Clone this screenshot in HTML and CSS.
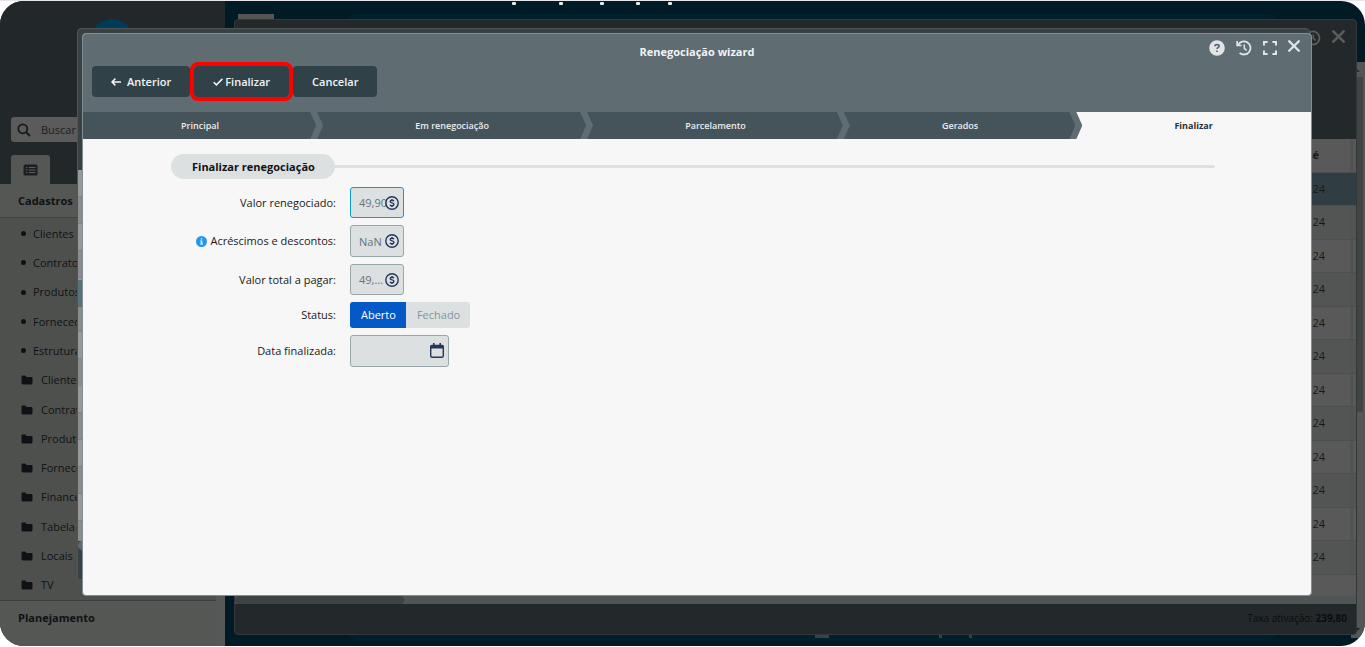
FILE: index.html
```html
<!DOCTYPE html>
<html lang="pt-BR">
<head>
<meta charset="utf-8">
<title>Renegociação wizard</title>
<link rel="stylesheet" href="styles.css">
</head>
<body>
<svg class="sprite" aria-hidden="true">
  <symbol id="folder" viewBox="0 0 12 10"><path d="M1.5 0.5H4.2L5.6 2H10.2Q11.5 2 11.5 3.2V8Q11.5 9.4 10.2 9.4H1.8Q0.5 9.4 0.5 8V1.6Q.5.5 1.5.5Z" fill="#0e1214"/></symbol>
  <symbol id="coin" viewBox="0 0 14 14"><circle cx="7" cy="7" r="6.2" fill="none" stroke="#26365a" stroke-width="1.4"/><path d="M8.9 5.2Q8.3 4.3 7 4.3Q5.2 4.3 5.2 5.5Q5.2 6.6 7 6.9Q8.9 7.3 8.9 8.5Q8.9 9.8 7 9.8Q5.6 9.8 5 8.8M7 3V4.3M7 9.8V11" fill="none" stroke="#26365a" stroke-width="1.4"/></symbol>
  <symbol id="close" viewBox="0 0 12 12"><path d="M1.2 1.2L10.8 10.8M10.8 1.2L1.2 10.8" fill="none" stroke="currentColor" stroke-width="2.3" stroke-linecap="round"/></symbol>
  <symbol id="history" viewBox="0 0 16 16"><path d="M2.2 5A6.5 6.5 0 1 1 3.6 12.8" fill="none" stroke="currentColor" stroke-width="1.8"/><path d="M.3 1V6.2H5.5V4.8L2.1 4.4L1.9 1Z" fill="currentColor"/><path d="M8.3 4.5V8.4L10.6 10.4" fill="none" stroke="currentColor" stroke-width="1.5"/></symbol>
</svg>
<div class="app">
  <aside class="sidebar">
    <div class="side-top">
      <div class="avatar"></div>
      <label class="search">
        <svg width="14" height="14" viewBox="0 0 14 14"><circle cx="5.8" cy="5.8" r="4.5" fill="none" stroke="#151a1c" stroke-width="1.8"/><path d="M9.2 9.2L13 13" stroke="#151a1c" stroke-width="2"/></svg>
        <input type="text" aria-label="Buscar" placeholder="Buscar no menu">
      </label>
      <button class="tab" type="button" aria-label="Menu">
        <svg width="15" height="12" viewBox="0 0 15 12"><rect x=".5" y=".5" width="14" height="11" rx="1.5" fill="#1b2022"/><path d="M3 3.5h1.5M3 6h1.5M3 8.5h1.5M6 3.5h6.5M6 6h6.5M6 8.5h6.5" stroke="#5b5d5b" stroke-width="1.1"/></svg>
      </button>
    </div>
    <h2 class="side-title">Cadastros</h2>
    <ul class="menu">
      <li><i class="dot"></i>Clientes</li>
      <li><i class="dot"></i>Contratos</li>
      <li><i class="dot"></i>Produtos</li>
      <li><i class="dot"></i>Fornecedores</li>
      <li><i class="dot"></i>Estruturas</li>
      <li><svg class="fold"><use href="#folder"/></svg>Clientes</li>
      <li><svg class="fold"><use href="#folder"/></svg>Contratos</li>
      <li><svg class="fold"><use href="#folder"/></svg>Produtos</li>
      <li><svg class="fold"><use href="#folder"/></svg>Fornecedores</li>
      <li><svg class="fold"><use href="#folder"/></svg>Financeiro</li>
      <li><svg class="fold"><use href="#folder"/></svg>Tabela</li>
      <li><svg class="fold"><use href="#folder"/></svg>Locais</li>
      <li><svg class="fold"><use href="#folder"/></svg>TV</li>
    </ul>
    <h2 class="side-title last">Planejamento</h2>
  </aside>
  <div class="gutter"></div>
  <main class="desk">
    <div class="marks"><i></i><i></i><i></i><i></i><i></i></div>
    <div class="desk-panel"></div>
    <div class="chip"></div>
    <div class="foot-marks"><i></i><i></i><i></i></div>
    <div class="page-scroll"><i class="arrow up"></i><i class="bar"></i><i class="arrow down"></i></div>
    <section class="window back">
      <header class="back-head">
        <svg class="ic16"><use href="#history"/></svg>
        <svg class="ic13"><use href="#close"/></svg>
      </header>
      <div class="back-body">
        <table>
          <thead><tr><th>é</th></tr></thead>
          <tbody>
            <tr class="sel"><td>24</td></tr><tr><td>24</td></tr><tr><td>24</td></tr><tr><td>24</td></tr>
            <tr><td>24</td></tr><tr><td>24</td></tr><tr><td>24</td></tr><tr><td>24</td></tr>
            <tr><td>24</td></tr><tr><td>24</td></tr><tr><td>24</td></tr><tr><td>24</td></tr>
          </tbody>
        </table>
      </div>
      <div class="hscroll"><i></i></div>
      <footer class="back-foot"><span>Taxa ativação: <b>239,80</b></span></footer>
    </section>
  </main>

  <section class="window middle">
    <div class="mid-head"></div>
    <div class="mid-body"></div>
    <div class="mid-scroll"></div>
    <div class="mid-foot"></div>
  </section>

  <section class="window wizard" role="dialog" aria-labelledby="wt">
    <header class="wiz-head">
      <h1 id="wt">Renegociação wizard</h1>
      <div class="tools">
        <button type="button" aria-label="Ajuda"><svg width="16" height="16" viewBox="0 0 16 16"><circle cx="8" cy="8" r="7.8" fill="currentColor"/><path d="M5.9 6.3Q6 4.7 8 4.7Q10.1 4.7 10.1 6.2Q10.1 7.1 9 7.6Q8 8.1 8 9.1M8 10.4V12" fill="none" stroke="#5f6c72" stroke-width="1.7"/></svg></button>
        <button type="button" aria-label="Histórico"><svg class="ic16"><use href="#history"/></svg></button>
        <button type="button" aria-label="Tela cheia"><svg width="14" height="14" viewBox="0 0 14 14"><path d="M1 4.6V1H4.6M9.4 1H13V4.6M13 9.4V13H9.4M4.6 13H1V9.4" fill="none" stroke="currentColor" stroke-width="2"/></svg></button>
        <button type="button" class="x" aria-label="Fechar"><svg class="ic12"><use href="#close"/></svg></button>
      </div>
      <div class="actions">
        <button type="button" class="prev"><svg width="10" height="8" viewBox="0 0 10 8"><path d="M10 4H1.2M4.4 .6L1 4L4.4 7.4" fill="none" stroke="currentColor" stroke-width="1.5"/></svg>Anterior</button>
        <button type="button" class="finish"><svg width="10" height="8" viewBox="0 0 10 8"><path d="M.7 4.2L3.4 6.9L9.4 .9" fill="none" stroke="currentColor" stroke-width="1.5"/></svg>Finalizar</button>
        <button type="button">Cancelar</button>
      </div>
    </header>
    <ol class="steps">
      <li>Principal</li><li>Em renegociação</li><li>Parcelamento</li><li>Gerados</li><li class="current">Finalizar</li>
    </ol>
    <form class="wiz-body">
      <h2 class="legend"><span>Finalizar renegociação</span></h2>
      <div class="fields">
        <label for="f1">Valor renegociado:</label>
        <div class="field slim focus"><input id="f1" type="text" value="49,90" readonly><svg class="ic14"><use href="#coin"/></svg></div>
        <label for="f2"><svg width="11" height="11" viewBox="0 0 11 11"><circle cx="5.5" cy="5.5" r="5.5" fill="#2196f3"/><path d="M4.8 2.2H6.3V3.5H4.8ZM4.2 4.5H6.3V7.5H7V8.5H4.1V7.5H4.8V5.4H4.2Z" fill="#e8f4ff"/></svg>Acréscimos e descontos:</label>
        <div class="field"><input id="f2" type="text" value="NaN" readonly><svg class="ic14"><use href="#coin"/></svg></div>
        <label for="f3">Valor total a pagar:</label>
        <div class="field slim"><input id="f3" class="short" type="text" value="49,90" readonly><svg class="ic14"><use href="#coin"/></svg></div>
        <span id="st">Status:</span>
        <div class="toggle" role="group" aria-labelledby="st"><button type="button" class="on">Aberto</button><button type="button">Fechado</button></div>
        <label for="f5">Data finalizada:</label>
        <div class="field date"><input id="f5" type="text" readonly><svg width="14" height="15" viewBox="0 0 14 15"><path d="M2 2.5H12Q13.3 2.5 13.3 3.8V12.8Q13.3 14.2 12 14.2H2Q.7 14.2.7 12.8V3.8Q.7 2.5 2 2.5Z" fill="none" stroke="#26365a" stroke-width="1.4"/><path d="M.7 2.2H13.3V5.4H.7ZM3 0H4.6V3H3ZM9.4 0H11V3H9.4Z" fill="#26365a"/></svg></div>
      </div>
    </form>
  </section>
</div>
</body>
</html>
```
FILE: styles.css
```css
* { box-sizing: border-box; }
body { margin: 0; background: #fff; font: 11px/16px "Open Sans", "Noto Sans", sans-serif; color: #1a1a1a; border-top: 1px solid #e6e6ea; }
button, input { font: inherit; color: inherit; border: 0; margin: 0; padding: 0; background: none; }
h1, h2, ol, ul { margin: 0; padding: 0; font-size: inherit; list-style: none; }
svg { display: block; flex: none; }
.sprite { position: absolute; width: 0; height: 0; }
.ic16 { width: 16px; height: 16px; }
.ic14 { width: 14px; height: 14px; }
.ic13 { width: 13px; height: 13px; }
.ic12 { width: 12px; height: 12px; }

.app { position: relative; display: flex; height: calc(100vh - 2px); border-radius: 24px; overflow: hidden; background: #001a26; }
.window { position: absolute; display: flex; flex-direction: column; overflow: hidden; }

.sidebar { flex: 0 0 216px; display: flex; flex-direction: column; background: #4e504e; color: #0e1214; }
.side-top { position: relative; flex: none; margin-right: -9px; padding: 116px 20px 0 11px; background: #22282a; }
.avatar { position: absolute; left: 90px; top: 18px; width: 44px; height: 44px; border-radius: 50%; background: #003c58; }
.search { display: flex; align-items: center; gap: 10px; height: 25px; padding: 0 6px; border-radius: 3px; background: #5b5b5b; }
.search input { width: 100px; outline: 0; }
.search input::placeholder { color: #1c2022; opacity: 1; }
.tab { display: flex; align-items: center; justify-content: center; width: 39px; height: 29px; margin-top: 13px; border-radius: 3px 3px 0 0; background: #555754; }
.side-title { flex: none; padding: 9px 18px 8px; background: #555754; border-bottom: 1px solid #3f4141; font-weight: 700; }
.menu { flex: 1; display: flex; flex-direction: column; padding-top: 1px; }
.menu li { flex: 1; display: flex; align-items: center; padding-left: 21px; white-space: nowrap; }
.dot { width: 5px; height: 5px; margin-right: 7px; border-radius: 50%; background: #0e1214; }
.fold { width: 12px; height: 10px; margin-right: 8px; }
.side-title.last { padding: 9px 18px 20px; border: 0; border-top: 1px solid #3c3f42; }
.gutter { flex: 0 0 9px; background: #555857; }

.desk { position: relative; flex: 1; }
.marks { display: flex; gap: 28px; padding: 1px 0 0 287px; }
.marks i { width: 4px; height: 3px; border-radius: 1px; background: #e8ece8; }
.marks i:nth-child(1) { margin-right: 15px; }
.marks i:nth-child(2) { margin-right: 9px; }
.marks i:nth-child(3) { margin-right: 4px; }
.desk-panel { position: absolute; inset: 13px 86px 6px 120px; border-radius: 14px; background: #00202e; }
.chip { position: absolute; left: 13px; top: 13px; width: 36px; height: 8px; background: #555; }
.foot-marks { position: absolute; left: 590px; bottom: 8px; display: flex; gap: 27px; }
.foot-marks i { width: 3px; height: 3px; background: #234f27; }
.foot-marks i:nth-child(1) { width: 14px; margin-right: 83px; background: #33454c; }
.page-scroll { position: absolute; top: 61px; right: 0; bottom: 8px; width: 14px; background: #555; }
.page-scroll .bar { position: absolute; top: 15px; right: 2px; width: 10px; height: 335px; background: #424443; }
.arrow { position: absolute; right: 5px; border: 4px solid transparent; }
.arrow.up { top: 2px; border-bottom-color: #2a2c2c; }
.arrow.down { bottom: 2px; border-top-color: #1c1e1e; }

.back { inset: 18px 8px 11px 9px; border: 1px solid #32383a; border-radius: 4px; background: #23282a; }
.back-head { flex: none; display: flex; justify-content: flex-end; gap: 11px; height: 119px; padding: 10px 11px; color: #5b5d5d; }
.back-body { flex: 1; min-height: 0; overflow: hidden; background: #595959; }
.back table { width: 100%; border-collapse: collapse; }
.back th, .back td { height: 33px; padding: 0 31px 0 0; border-bottom: 1px solid #4d4f4f; text-align: right; color: #16191a; background: linear-gradient(#515353, #515353) no-repeat right 3px top 0 / 3px 100%; }
.back th { padding-right: 37px; }
.back tbody tr:nth-child(even) td { height: 34px; }
.back tbody tr:nth-child(even) { background: #535554; }
.back tr.sel { background: #303e44; }
.back tr.sel td { background-image: none; }
.hscroll { flex: none; height: 8px; background: #515555; }
.hscroll i { display: block; width: 169px; height: 8px; border-radius: 4px; background: #3d4243; }
.back-foot { flex: none; padding: 6px 9px 8px; text-align: right; font-size: 10px; color: #0b0d0e; }

.middle { inset: 27px 55px 66px 77px; border: 1px solid #4d5557; border-radius: 4px; background: #3a4143; }
.mid-head { flex: none; height: 141px; }
.mid-body { flex: 1; background: linear-gradient(#5a717a, #5a717a) no-repeat 0 110px / 100% 27px, repeating-linear-gradient(#989898 0 26px, #808282 26px 27px, #8a8c8c 27px 53px, #808282 53px 54px); }
.mid-scroll { flex: none; height: 9px; border-radius: 5px 0 0 5px; background: #616a6d; }
.mid-foot { flex: none; height: 29px; background: #384144; }

.wizard { inset: 32px 53px 50px 82px; border: 1px solid #7f8e94; border-radius: 4px; background: #f7f7f7; }
.wiz-head { position: relative; flex: none; padding: 10px 9px 15px; background: #5f6c72; color: #f2f4f4; }
.wiz-head h1 { text-align: center; font-weight: 700; }
.tools { position: absolute; top: 6px; right: 11px; display: flex; gap: 11px; align-items: flex-start; color: #e1e5e6; }
.tools button:nth-child(3) { padding-top: 1px; }
.actions { display: flex; margin-top: 6px; }
.actions button { display: flex; align-items: center; height: 31px; padding: 0 19px; border-radius: 4px; background: #314148; font-weight: 600; }
.actions .prev { gap: 6px; }
.actions .finish { gap: 2px; margin: 0 4px; outline: 4px solid #f00; }
.steps { flex: none; display: flex; background: #45535a; color: #e9eded; font-size: 9px; font-weight: 600; line-height: 27px; text-align: center; }
.steps li { position: relative; flex: 1 1 auto; }
.steps li:not(.current)::after { content: ""; position: absolute; z-index: 1; top: 0; right: -6px; width: 13px; height: 100%; background: #5f6c72; clip-path: polygon(0 0, 7px 0, 100% 50%, 7px 100%, 0 100%, 6px 50%); }
.steps .current { background: #f7f7f7; color: #26343a; font-weight: 700; }

.wiz-body { flex: 1; padding: 15px 96px 0 88px; }
.legend { display: flex; align-items: center; height: 25px; color: #111; font-weight: 700; }
.legend span { padding: 5px 20px 4px 21px; border-radius: 13px; background: #dce0e1; }
.legend::after { content: ""; flex: 1; height: 3px; border-radius: 0 2px 2px 0; background: #dce0e1; }
.fields { display: grid; grid-template-columns: 165px auto; justify-content: start; align-items: center; gap: 7px 14px; margin-top: 8px; }
.fields > label, .fields > span { display: flex; justify-content: flex-end; align-items: center; gap: 3px; white-space: nowrap; }
.field { position: relative; width: 54px; height: 32px; border: 1px solid #9aa5aa; border-radius: 3px; background: #dce0e1; color: #66737a; }
.field.slim { height: 31px; }
.field.focus { border-color: #0b9ddb; }
.field input { width: 100%; height: 100%; padding-left: 8px; outline: 0; }
.field input.short { width: 33px; text-overflow: ellipsis; }
.field svg { position: absolute; top: 8px; right: 4px; }
.field.date { width: 99px; }
.field.date svg { top: 7px; }
.toggle { display: flex; height: 26px; border-radius: 3px; overflow: hidden; background: #dce0e1; color: #84949b; justify-self: start; }
.toggle button { padding: 0 10px 0 11px; }
.toggle .on { background: #0559c7; color: #fff; }
```
